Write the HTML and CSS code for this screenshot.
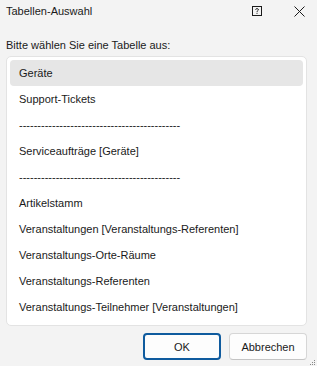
FILE: index.html
```html
<!DOCTYPE html>
<html lang="de">
<head>
<meta charset="utf-8">
<title>Tabellen-Auswahl</title>
<link rel="stylesheet" href="styles.css">
</head>
<body>
<div class="dialog">
  <div class="titlebar">
    <span class="title">Tabellen-Auswahl</span>
    <span class="tb-btn help">
      <svg width="10" height="10" viewBox="0 0 10 10"><rect x="0.5" y="0.5" width="9" height="9" fill="none" stroke="#1a1a1a" stroke-width="1"/><path d="M3.5 3.6 C3.5 2.4 6.5 2.4 6.5 3.6 C6.5 4.6 5 4.6 5 5.9" fill="none" stroke="#1a1a1a" stroke-width="1"/><rect x="4.5" y="6.8" width="1" height="1" fill="#1a1a1a"/></svg>
    </span>
    <span class="tb-btn close">
      <svg width="11" height="11" viewBox="0 0 11 11"><path d="M0.5 0.5 L10.5 10.5 M10.5 0.5 L0.5 10.5" stroke="#1a1a1a" stroke-width="1"/></svg>
    </span>
  </div>
  <div class="prompt">Bitte wählen Sie eine Tabelle aus:</div>
  <div class="listbox">
    <div class="item selected">Geräte</div>
    <div class="item">Support-Tickets</div>
    <div class="item">--------------------------------------------</div>
    <div class="item">Serviceaufträge [Geräte]</div>
    <div class="item">--------------------------------------------</div>
    <div class="item">Artikelstamm</div>
    <div class="item">Veranstaltungen [Veranstaltungs-Referenten]</div>
    <div class="item">Veranstaltungs-Orte-Räume</div>
    <div class="item">Veranstaltungs-Referenten</div>
    <div class="item">Veranstaltungs-Teilnehmer [Veranstaltungen]</div>
  </div>
  <div class="buttons">
    <button class="btn primary">OK</button>
    <button class="btn">Abbrechen</button>
  </div>
  <svg class="grip" width="6" height="6" viewBox="0 0 6 6"><rect x="4" y="0" width="1" height="1" fill="#888"/><rect x="2" y="2" width="1" height="1" fill="#888"/><rect x="4" y="2" width="1" height="1" fill="#888"/><rect x="0" y="4" width="1" height="1" fill="#888"/><rect x="2" y="4" width="1" height="1" fill="#888"/><rect x="4" y="4" width="1" height="1" fill="#888"/></svg>
</div>
</body>
</html>
```

FILE: styles.css
```css
html, body {
  margin: 0;
  padding: 0;
  background: #f3f3f3;
}
body {
  font-family: "Liberation Sans", Arial, sans-serif;
  font-size: 11px;
  color: #1a1a1a;
}
.dialog {
  position: relative;
  width: 317px;
  height: 366px;
  overflow: hidden;
}
.titlebar {
  display: flex;
  align-items: center;
  height: 22px;
  padding-left: 6px;
}
.title {
  flex: 1;
  line-height: 22px;
}
.tb-btn {
  display: flex;
  align-items: center;
  justify-content: center;
}
.help {
  width: 10px;
  height: 22px;
  margin-right: 32px;
}
.close {
  width: 11px;
  height: 22px;
  margin-right: 12px;
}
.prompt {
  margin-top: 16px;
  padding-left: 6px;
  line-height: 14px;
}
.listbox {
  margin: 4px 10px 0 6px;
  height: 261px;
  background: #ffffff;
  border: 1px solid #e3e3e3;
  border-radius: 5px;
  padding: 3px 3px 4px 3px;
}
.item {
  height: 26px;
  line-height: 26px;
  padding-left: 9px;
  border-radius: 4px;
  white-space: nowrap;
}
.item.selected {
  background: #e6e6e6;
}
.buttons {
  display: flex;
  justify-content: flex-end;
  gap: 8px;
  margin-top: 7px;
  padding-right: 10px;
}
.btn {
  width: 78px;
  height: 27px;
  box-sizing: border-box;
  font-family: inherit;
  font-size: 11px;
  color: #1a1a1a;
  background: #fdfdfd;
  border: 1px solid #d6d6d6;
  border-bottom-color: #c4c4c4;
  border-radius: 4px;
  padding: 0;
}
.btn.primary {
  border: 2px solid #0f5b9e;
}
.grip {
  position: absolute;
  right: 1px;
  bottom: 0px;
}
```
